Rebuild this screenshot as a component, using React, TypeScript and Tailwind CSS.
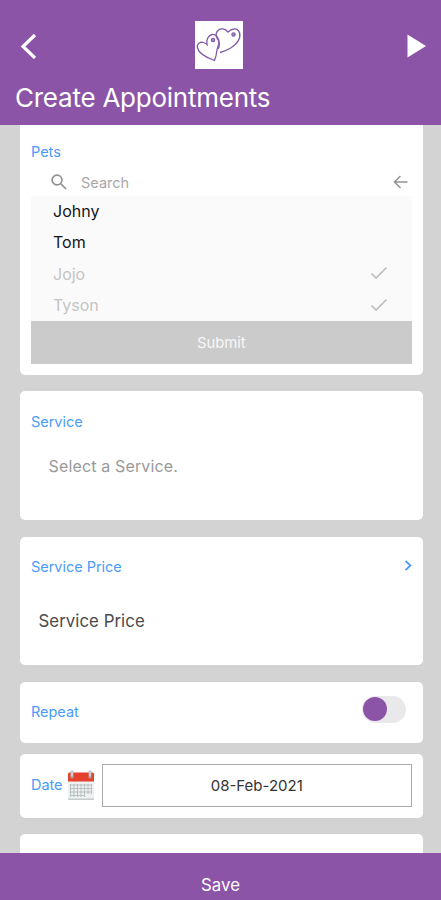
import type { ReactNode } from "react";

const pets = [
  { name: "Johny", selected: false },
  { name: "Tom", selected: false },
  { name: "Jojo", selected: true },
  { name: "Tyson", selected: true },
];

function HeartsLogo() {
  return (
    <svg width="48" height="48" viewBox="0 0 48 48" fill="none" stroke="#8459a6" strokeWidth="1.3">
      <rect width="48" height="48" fill="#fff" stroke="none" />
      <path d="M25 31.500C31 30 42 25 44.500 17C46 11 43 7.500 39 8C36 8.200 34.500 9.500 33 11C30 7.500 26 7 23.500 9C21 11 20.500 14 22 17C24 20 25.500 24 23 28" />
      <path d="M19.500 39.500C14 37.500 4 33 2.500 27C1.500 23 5 20.500 8.500 21.500C10 22 11 22.500 12 23.500C11 19 13 14.500 17 13.500C21 13 24 17 24 21C24 24 22.500 26 22 29C21.500 33 21 36 19.500 39.500Z" />
      <circle cx="38.500" cy="13.500" r="1.600" fill="#98a0c8" />
      <circle cx="18" cy="19" r="1.600" fill="#98a0c8" />
    </svg>
  );
}

function CalendarIcon() {
  return (
    <svg width="28" height="32" viewBox="0 0 28 32" className="mb-[2px]">
      <rect x="1" y="5" width="26" height="26" rx="1.500" fill="#c3cccc" />
      <rect x="1" y="4" width="26" height="25.500" rx="1.500" fill="#edf1f0" />
      <path d="M1 12.500V5Q1 3.500 2.500 3.500H25.500Q27 3.500 27 5V12.500Z" fill="#e4412f" />
      <path d="M5 8V3M23 8V3" stroke="#a9a9a9" strokeWidth="3" strokeLinecap="round" />
      <path d="M5 6.500V3M23 6.500V3" stroke="#dedede" strokeWidth="1.500" strokeLinecap="round" />
      <path
        d="M3.500 16H24.500M3.500 19.500H24.500M3.500 23H24.500M3.500 26.500H17M3.500 15V28M7 15V28M10.500 15V28M14 15V28M17.500 15V28M21 15V25M24.500 15V25"
        stroke="#b3bbbb"
        strokeWidth="0.900"
        fill="none"
      />
    </svg>
  );
}

function Check() {
  return (
    <svg width="18" height="14" viewBox="0 0 18 14" className="mb-px" fill="none" stroke="#bdbdbd" strokeWidth="1.600">
      <path d="M1.500 7.500L6 12L16.500 1.500" />
    </svg>
  );
}

function Card({ className, children }: { className: string; children?: ReactNode }) {
  return <section className={`shrink-0 rounded-[5px] bg-white pr-[11px] pl-[11px] ${className}`}>{children}</section>;
}

function Label({ children }: { children: ReactNode }) {
  return <h2 className="text-[14.5px] leading-5 tracking-[-0.03px] text-[#4a9cf8]">{children}</h2>;
}

export default function App() {
  return (
    <div className="flex h-[900px] w-full flex-col overflow-hidden bg-[#d3d3d3] font-['Inter',sans-serif]">
      <header className="h-[125px] shrink-0 bg-[#8b54a7] px-[15px] pt-[21px] text-white">
        <div className="flex h-12 items-center justify-between">
          <button className="flex w-12 pt-px pl-[5px]" aria-label="Back">
            <svg width="17" height="26" viewBox="0 0 17 26" fill="none" stroke="currentColor" strokeWidth="3.200">
              <path d="M15 2L3 13.500L15 25" />
            </svg>
          </button>
          <div className="pr-[3px]">
            <HeartsLogo />
          </div>
          <button className="flex w-12 justify-end pt-[2px]" aria-label="Next">
            <svg width="19" height="24" viewBox="0 0 19 24" fill="currentColor">
              <path d="M0.500 0.500L19 12L0.500 23.500Z" />
            </svg>
          </button>
        </div>
        <h1 className="mt-[11px] text-[26px] leading-9 tracking-[-0.24px] whitespace-nowrap">Create Appointments</h1>
      </header>

      <main className="flex min-h-0 flex-1 flex-col overflow-hidden pr-[18.5px] pl-5">
        <Card className="h-[250px] rounded-t-none pt-[17px]">
          <Label>Pets</Label>
          <div className="flex h-[34px] items-center pt-[7px] pr-[4px] pl-5 text-[#929292]">
            <svg width="16" height="16" viewBox="0 0 16 16" className="mb-[2px]" fill="none" stroke="currentColor" strokeWidth="1.700">
              <circle cx="6" cy="6" r="4.900" />
              <path d="M9.500 9.500L15 15" />
            </svg>
            <span className="flex-1 pt-px pl-[14px] text-[14.5px] text-[#a8a8a8]">Search</span>
            <svg width="15" height="14" viewBox="0 0 15 14" className="mb-px" fill="none" stroke="currentColor" strokeWidth="1.500">
              <path d="M14.500 7H1.500M7.500 1L1.500 7L7.500 13" />
            </svg>
          </div>
          <ul className="h-[125px] bg-[#fafafa] pr-6 pl-[22px] text-base">
            {pets.map((pet) => (
              <li
                key={pet.name}
                className={`flex h-[31.5px] items-center justify-between pb-[2px] ${pet.selected ? "text-[#c5c5c5]" : "text-[#151515]"}`}
              >
                {pet.name}
                {pet.selected && <Check />}
              </li>
            ))}
          </ul>
          <button className="h-[43px] w-full bg-[#cbcbcb] pt-px text-[14.8px] text-[#f7f7f7]">Submit</button>
        </Card>

        <Card className="mt-4 h-[129px] pt-[21px]">
          <Label>Service</Label>
          <p className="mt-[22px] pl-[17.5px] text-[16px] leading-6 tracking-[0.15px] text-[#999]">Select a Service.</p>
        </Card>

        <Card className="mt-[16.5px] h-[128.5px] pt-5">
          <div className="flex items-center justify-between">
            <Label>Service Price</Label>
            <svg width="8" height="11" viewBox="0 0 8 11" className="mb-[2px]" fill="none" stroke="#4a9cf8" strokeWidth="1.700">
              <path d="M1.500 1L6.500 5.500L1.500 10" />
            </svg>
          </div>
          <p className="mt-8 pl-[7.5px] text-[16.8px] leading-6 tracking-[0.06px] text-[#4a4a4a]">Service Price</p>
        </Card>

        <Card className="mt-[16.5px] flex h-[61px] items-center justify-between">
          <Label>Repeat</Label>
          <div className="mr-[6px] mb-[6px] flex h-[27px] w-[44px] items-center rounded-full bg-[#e9e9eb] pl-px">
            <span className="h-6 w-6 rounded-full bg-[#8b54a7]" />
          </div>
        </Card>

        <Card className="mt-[11px] flex h-[64.5px] items-center">
          <div className="w-[36px] shrink-0 pb-[2px]">
            <Label>Date</Label>
          </div>
          <CalendarIcon />
          <div className="ml-[7px] flex h-[43px] flex-1 items-center justify-center border border-[#aaa] text-[15px] text-[#333]">
            08-Feb-2021
          </div>
        </Card>

        <Card className="mt-4 h-16" />
      </main>

      <footer className="flex h-[47.5px] shrink-0 justify-center bg-[#8b54a7] pt-5 text-[16.8px] leading-6 text-white">
        Save
      </footer>
    </div>
  );
}
